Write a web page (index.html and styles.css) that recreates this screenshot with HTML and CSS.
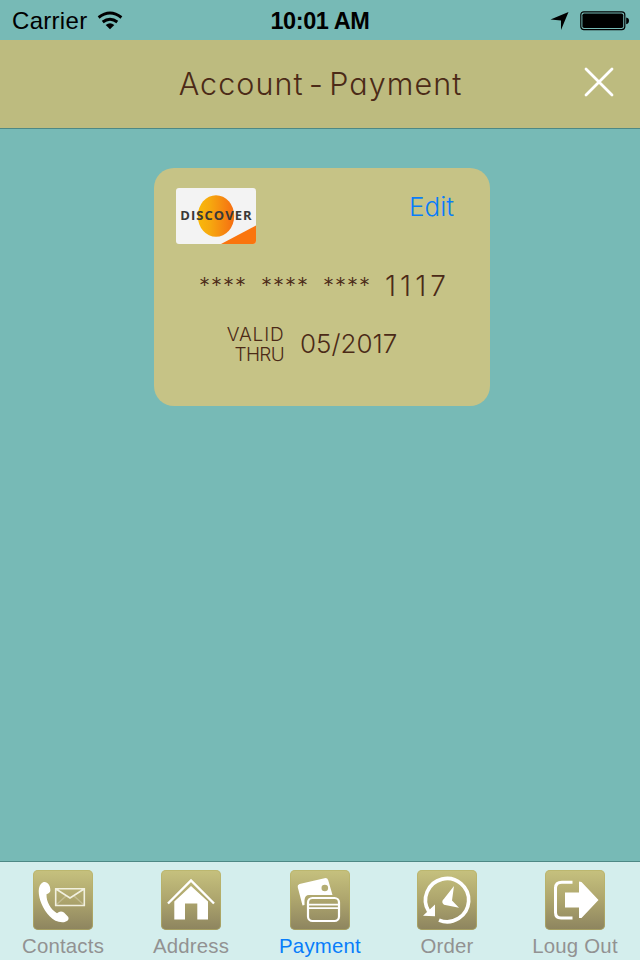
FILE: index.html
```html
<!DOCTYPE html>
<html lang="en">
<head>
<meta charset="utf-8">
<title>Account - Payment</title>
<link rel="stylesheet" href="styles.css">
</head>
<body>
<div class="screen">
  <div class="status">
    <div class="carrier"><span class="carrier-name">Carrier</span>
      <svg class="wifi" width="26" height="19" viewBox="0 0 26 19"><g fill="none" stroke="#000" stroke-width="2.9"><path d="M1.6 6.5Q13-2.5 24.4 6.5"/><path d="M5.7 11Q13 5.3 20.3 11"/></g><path d="M8.7 13.9Q13 10.7 17.3 13.9L13 18.2Z"/></svg>
    </div>
    <div class="time"><span>10:01 AM</span></div>
    <div class="indicators">
      <svg width="20" height="20" viewBox="0 0 20 20"><path d="M18.5 1 11 19V9.5L.5 8.5Z"/></svg>
      <svg width="50" height="20" viewBox="0 0 50 20"><rect x=".8" y=".8" width="44" height="17.8" rx="3" fill="none" stroke="#000" stroke-width="1.2"/><rect x="2.4" y="2.4" width="40.8" height="14.6" rx="1.8"/><path d="M46.2 6.5Q49 7 49 9.8T46.2 13.2Z"/></svg>
    </div>
  </div>
  <header class="header">
    <h1 class="title">Account - Payment</h1>
    <svg class="close" width="30" height="30" viewBox="0 0 30 30"><path d="M2 2 28 28M28 2 2 28" fill="none" stroke="#fff" stroke-width="2.8" stroke-linecap="round"/></svg>
  </header>
  <main class="content">
    <section class="card">
      <div class="card-top">
        <svg class="brand" width="80" height="56" viewBox="0 0 80 56">
          <defs><linearGradient id="sun"><stop offset="0" stop-color="#f9b90b"/><stop offset=".35" stop-color="#f6a70f"/><stop offset="1" stop-color="#f66d12"/></linearGradient></defs>
          <rect width="80" height="56" rx="3" fill="#f3f3f3"/>
          <ellipse cx="40" cy="28" rx="18.2" ry="20.8" fill="url(#sun)"/>
          <path d="M45 56 80 37.5V53Q80 56 77 56Z" fill="#fa750e"/>
          <text class="brand-text" x="4.2" y="32.2" textLength="71.5">DISCOVER</text>
        </svg>
        <span class="edit">Edit</span>
      </div>
      <div class="number"><span class="stars">****</span><span class="stars">****</span><span class="stars">****</span><span class="last">1117</span></div>
      <div class="expiry"><div class="valid"><div class="valid-line">VALID</div><div class="thru-line">THRU</div></div><span class="date">05/2017</span></div>
    </section>
  </main>
  <nav class="tabs">
    <div class="tab"><svg class="icon" viewBox="0 0 60 60">
      <path fill="#fff" d="M10 12.3C14 10.8 17.5 15 17.4 20.3Q17.4 23 13.5 24.2C13.3 32 17.5 39 24 43.3Q27.5 40 31 42.6L35.3 47Q36.8 50.7 31 52.2C20.5 53.5 12.5 43 8.6 34C5.1 26 4 15 10 12.3Z"/>
      <g fill="none" stroke="#f1f0df" stroke-width="1.6"><path d="M22.7 18.7H51.3V35.5H22.7ZM23 19 37 28 51 19"/><path stroke-opacity=".3" d="M23 35 33 26M51 35 41 26"/></g></svg><span class="label contacts">Contacts</span></div>
    <div class="tab"><svg class="icon" viewBox="0 0 60 60"><path fill="#fff" d="M30 16 47 31.5V49.5H36.3V33.5H24V49.5H13.3V31.5Z"/><path fill="none" stroke="#fff" stroke-width="2.4" d="M7 33.5 30 10.5 53 33.5"/></svg><span class="label address">Address</span></div>
    <div class="tab active"><svg class="icon" viewBox="0 0 60 60">
      <path fill="#fff" d="M9.5 14 34.5 8.2Q37.5 7.7 38.3 10.5L42.5 25H19Q15 25 14.5 30V35L12.5 35.5 7.7 17Q7.3 14.8 9.5 14Z"/><circle cx="34.8" cy="18" r="3.3" fill="#b5ae74"/>
      <rect x="18" y="28" width="31" height="23" rx="4.5" fill="none" stroke="#fff" stroke-width="2.2"/><path d="M18 34.7H49M18 38.2H49" fill="none" stroke="#fff" stroke-width="1.8"/></svg><span class="label payment">Payment</span></div>
    <div class="tab"><svg class="icon" viewBox="0 0 60 60">
      <path fill="none" stroke="#fff" stroke-width="3.7" d="M11.7 41.4A21.6 21.6 0 1 1 22 50.1"/><path fill="#fff" d="M6 45.7 18 34.5V46.2ZM37 16 35 30.5 42 37.7 27 34.7Q23.5 32 27 28.7Z"/></svg><span class="label order">Order</span></div>
    <div class="tab"><svg class="icon" viewBox="0 0 60 60"><path fill="none" stroke="#fff" stroke-width="3" d="M27.5 12.2H17Q10.5 12.2 10.5 18V42.5Q10.5 48 16 48H27.5"/><path fill="#fff" d="M20 22.5H34V11.5L36.5 12 53.5 30 36.5 48H34V37.5H20Z"/></svg><span class="label logout">Loug Out</span></div>
  </nav>
</div>
</body>
</html>
```
FILE: styles.css
```css
* { box-sizing: border-box; }
body { margin: 0; font-family: Inter, "Liberation Sans", sans-serif; font-weight: 300; color: #4b2a17; font-feature-settings: "cv11"; }
.screen { width: 640px; height: 960px; display: flex; flex-direction: column; background: #77bab6; overflow: hidden; }
svg { display: block; flex: none; }
.status { height: 40px; display: grid; grid-template-columns: 1fr 120px 1fr; align-items: center; color: #000; font: 400 24px/40px "Liberation Sans", sans-serif; }
.carrier { display: flex; align-items: center; gap: 10px; padding-left: 12px; }
.carrier-name { letter-spacing: .3px; padding-top: 1px; }
.time { text-align: center; font-weight: 700; font-size: 23.5px; letter-spacing: -.4px; padding-top: 1px; }
.indicators { display: flex; justify-content: flex-end; gap: 10px; padding-right: 10px; padding-top: 1px; }
.header { height: 89px; background: #bdbb7f; border-bottom: 1px solid #4d8885; display: grid; grid-template-columns: 1fr auto 1fr; align-items: center; padding-right: 26px; padding-left: 26px; }
.title { grid-column: 2; margin: 0 0 1px 1px; font-size: 30.5px; line-height: 40px; font-weight: 300; letter-spacing: 1.05px; word-spacing: -4.2px; white-space: nowrap; }
.close { justify-self: end; margin-top: -4px; }
.content { flex: 1; padding: 39px 150px 0 154px; }
.card { height: 238px; border-radius: 20px; background: #c6c386; padding: 20px 36px 0 22px; }
.card-top { display: flex; justify-content: space-between; align-items: flex-start; height: 76px; }
.brand-text { font: 700 13px "Open Sans", "Noto Sans", sans-serif; fill: #3a3937; }
.edit { color: #087dfa; font-size: 26px; line-height: 36px; letter-spacing: 0; padding-top: 1px; }
.number { display: flex; gap: 15px; height: 44px; line-height: 44px; font-size: 28px; padding-left: 23px; }
.stars { font-size: 22px; width: 47px; letter-spacing: 1px; margin-top: -1px; }
.last { letter-spacing: 4.1px; }
.expiry { display: flex; gap: 16px; align-items: center; height: 40px; margin-top: 17px; padding-left: 50px; font-size: 26px; }
.date { padding-bottom: 4px; }
.valid { font-size: 19px; line-height: 20px; text-align: right; width: 58px; }
.valid-line { letter-spacing: .8px; margin-right: -.4px; }
.thru-line { letter-spacing: -.7px; }
.tabs { height: 99px; background: #d4eeed; border-top: 1px solid #4d8885; display: grid; grid-template-columns: 126px 130px 128px 126px 130px; }
.tab { display: flex; flex-direction: column; align-items: center; padding-top: 8px; color: #929292; font: 400 20px/23px "Liberation Sans", sans-serif; }
.icon { width: 60px; height: 60px; border-radius: 5px; background: linear-gradient(#c6c17e, #ada56d 50%, #8d845f); box-shadow: inset 0 0 0 1px #b5b16699; }
.label { margin-top: 5px; font-size: 20.4px; letter-spacing: .2px; white-space: nowrap; }
.active { color: #087dfa; }
```
